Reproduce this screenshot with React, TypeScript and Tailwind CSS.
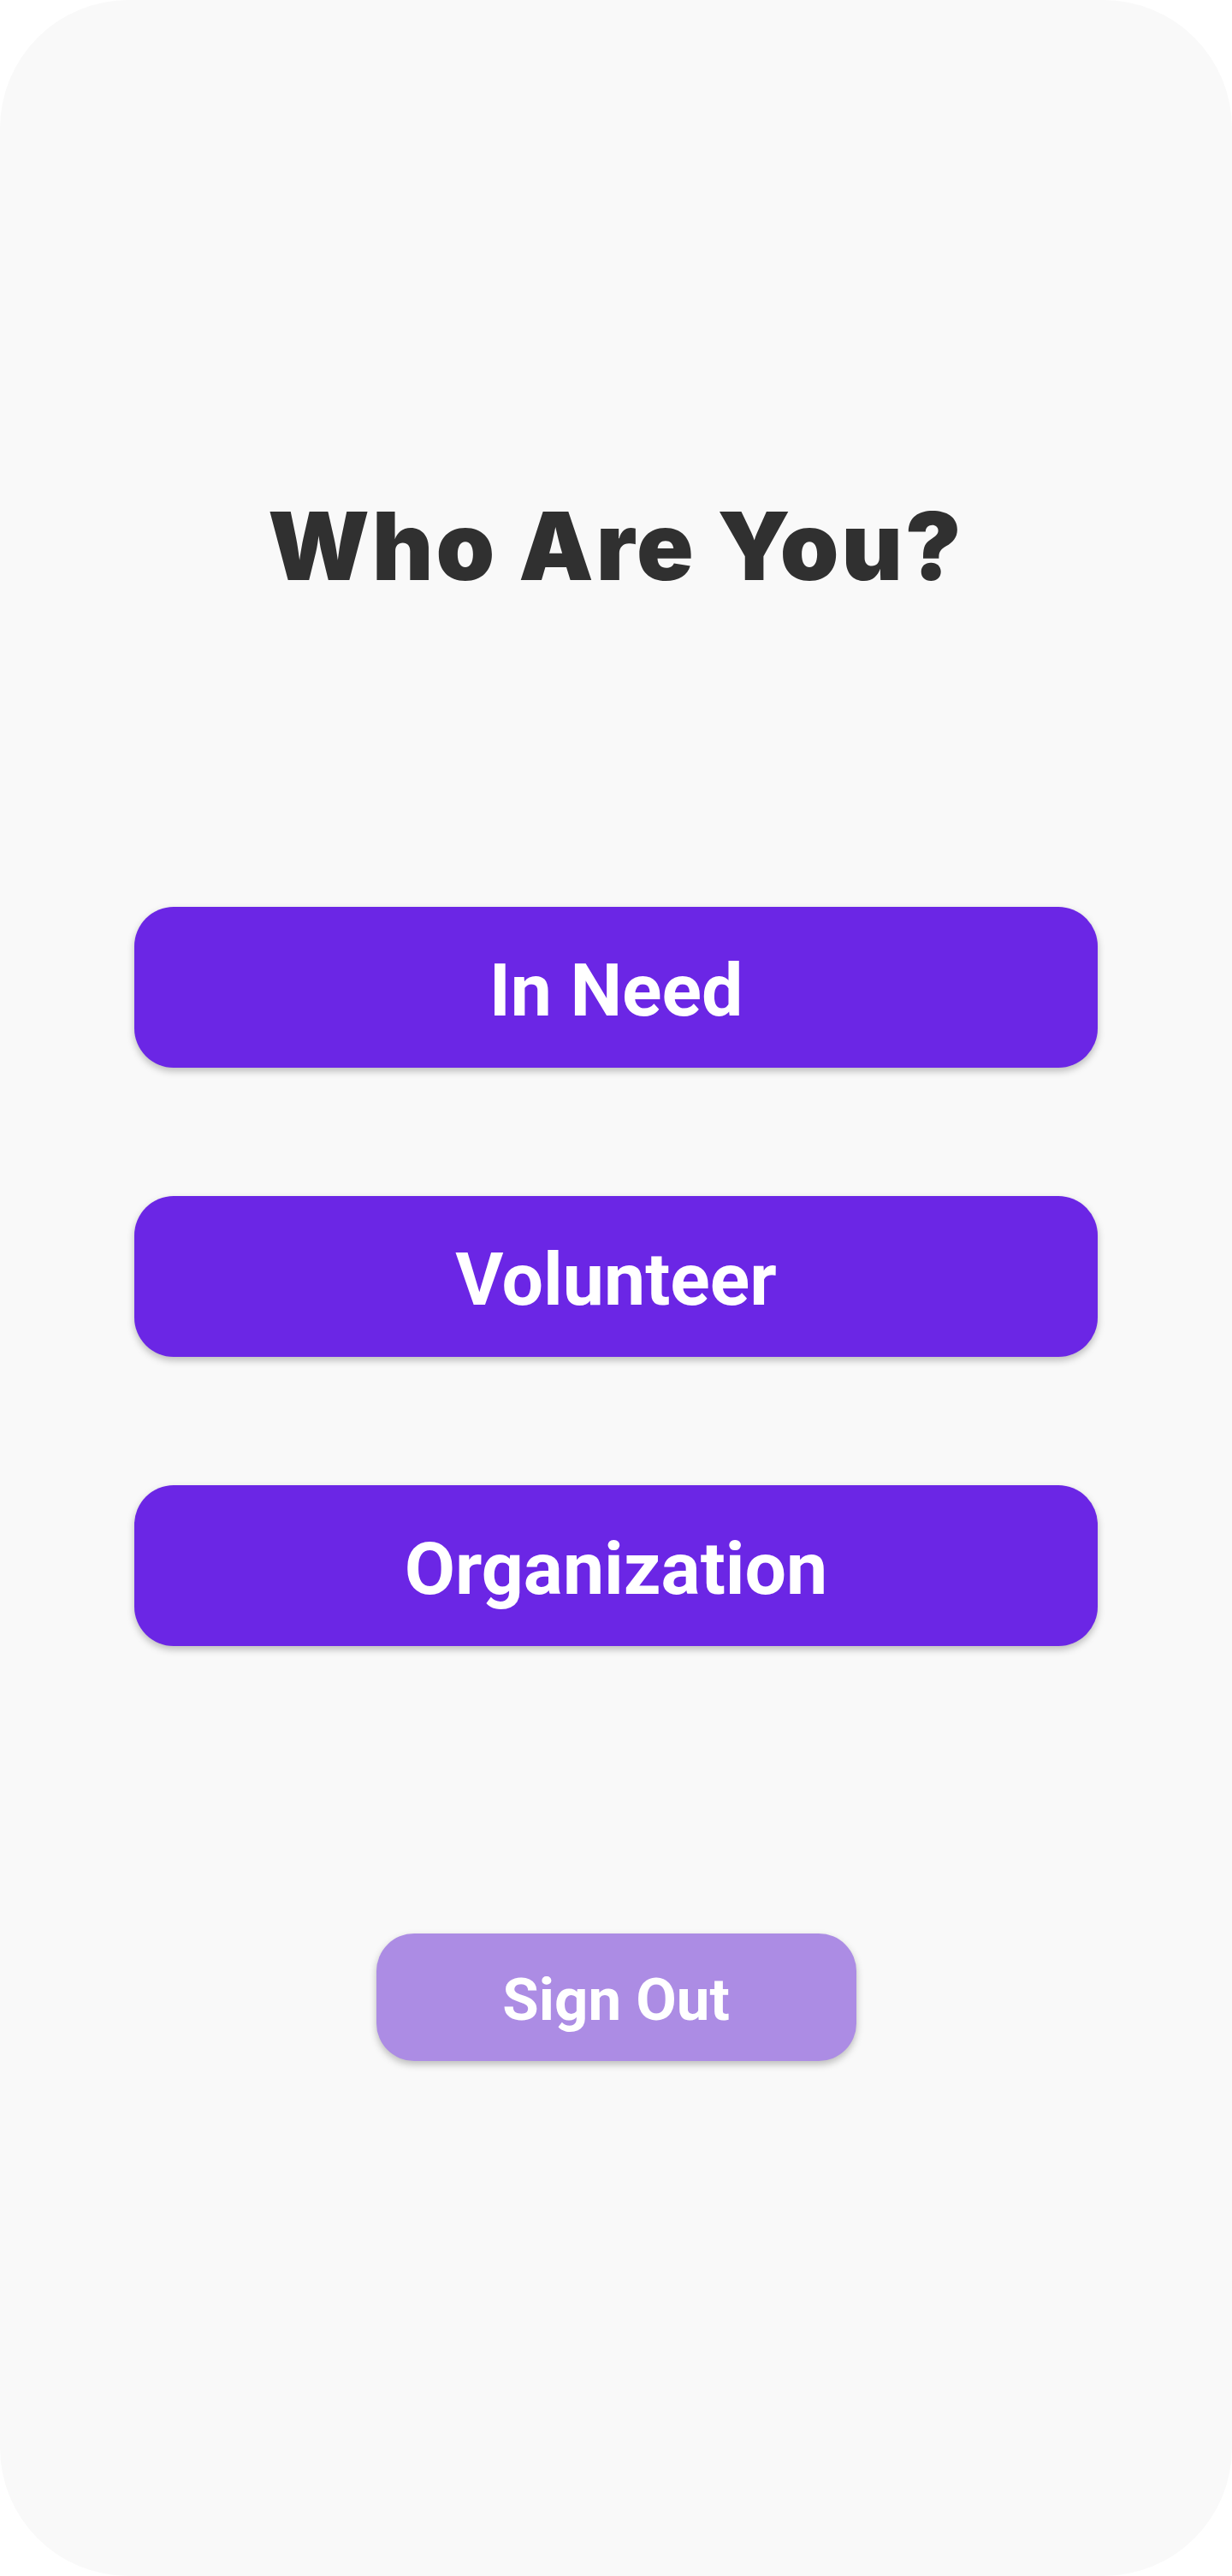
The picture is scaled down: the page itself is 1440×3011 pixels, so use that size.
export default function App() {
  const choices = ['In Need', 'Volunteer', 'Organization'];

  return (
    <div className="w-[1440px] h-[3011px] bg-white">
      <div className="w-full h-full rounded-[150px] bg-[#f9f9f9] flex flex-col items-center pt-[583px]">
        {/* Title */}
        <h1 className="font-['Inter',sans-serif] font-black text-[110px] leading-none tracking-[3px] text-[#303030]">
          Who Are You?
        </h1>

        {/* Role buttons */}
        <div className="mt-[367px] flex flex-col gap-[150px]">
          {choices.map((label) => (
            <button
              key={label}
              className="w-[1126px] h-[188px] rounded-[46px] bg-[#6b26e5] text-white font-['Roboto',sans-serif] font-bold text-[86px] leading-none pt-[8px] shadow-[0_4px_8px_rgba(0,0,0,0.25)] flex items-center justify-center"
            >
              {label}
            </button>
          ))}
        </div>

        {/* Sign out */}
        <button className="mt-[336px] w-[561px] h-[149px] rounded-[44px] bg-[#ac8ce4] text-white font-['Roboto',sans-serif] font-bold text-[69px] leading-none pt-[6px] shadow-[0_4px_8px_rgba(0,0,0,0.25)] flex items-center justify-center">
          Sign Out
        </button>
      </div>
    </div>
  );
}
